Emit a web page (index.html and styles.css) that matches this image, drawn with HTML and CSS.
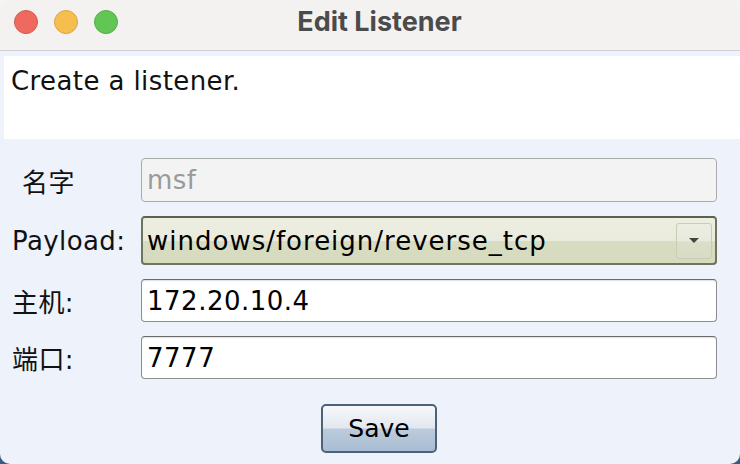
FILE: index.html
```html
<!DOCTYPE html>
<html>
<head>
<meta charset="utf-8">
<link rel="stylesheet" href="styles.css">
</head>
<body>
<div class="window">
  <div class="titlebar">
    <div class="lights">
      <span class="light red"></span>
      <span class="light yellow"></span>
      <span class="light green"></span>
    </div>
    <div class="title">Edit Listener</div>
  </div>
  <div class="content">
    <div class="desc">Create a listener.</div>
    <div class="form">
      <div class="label indent">名字</div>
      <div class="field disabled">msf</div>
      <div class="label">Payload:</div>
      <div class="combo">
        <span class="combo-text">windows/foreign/reverse_tcp</span>
        <span class="combo-btn"><span class="arrow"></span></span>
      </div>
      <div class="label">主机:</div>
      <div class="field">172.20.10.4</div>
      <div class="label">端口:</div>
      <div class="field">7777</div>
    </div>
    <div class="actions">
      <button class="save">Save</button>
    </div>
  </div>
</div>
</body>
</html>
```
FILE: styles.css
```css
html, body {
  margin: 0;
  padding: 0;
  width: 740px;
  height: 464px;
  overflow: hidden;
  background: linear-gradient(#f4f4f4 50%, #3c5a7c 50%);
}
.window {
  width: 740px;
  height: 464px;
  border-radius: 10px;
  overflow: hidden;
  background: #eef2fa;
  display: flex;
  flex-direction: column;
  font-family: "DejaVu Sans", "Noto Sans CJK SC", sans-serif;
}
.titlebar {
  height: 50px;
  background: #f3f2f1;
  border-bottom: 1px solid #cfd0d6;
  position: relative;
  display: flex;
  align-items: center;
  justify-content: center;
  flex-shrink: 0;
}
.lights {
  position: absolute;
  left: 14px;
  top: 10px;
  display: flex;
  gap: 16px;
}
.light {
  width: 24px;
  height: 24px;
  border-radius: 50%;
  box-sizing: border-box;
}
.red { background: #ee6a5f; border: 1px solid #d65a50; }
.yellow { background: #f5be4f; border: 1px solid #dca541; }
.green { background: #62c655; border: 1px solid #53ad47; }
.title {
  font-family: Inter, "Liberation Sans", sans-serif;
  font-weight: 700;
  font-size: 27px;
  color: #4b4b4b;
  margin-top: -8px;
  margin-left: 19px;
}
.content {
  flex: 1;
  display: flex;
  flex-direction: column;
}
.desc {
  margin: 5px 0 0 4px;
  height: 83px;
  background: #ffffff;
  font-size: 26px;
  letter-spacing: 0.4px;
  color: #111;
  padding: 10px 0 0 7px;
  box-sizing: border-box;
  line-height: 30px;
}
.form {
  margin-top: 19px;
  padding: 0 23px 0 12px;
  display: grid;
  grid-template-columns: 129px 1fr;
  row-gap: 14px;
  align-items: center;
}
.label {
  font-size: 26px;
  letter-spacing: 0.4px;
  color: #111;
}
.label.indent { padding-left: 10px; }
.field {
  height: 43px;
  box-sizing: border-box;
  background: #fff;
  border: 1px solid #8e8e8e;
  border-top-color: #6a6a6a;
  border-radius: 4px;
  box-shadow: inset 0 1px 1px rgba(0,0,0,0.12);
  font-size: 26px;
  letter-spacing: 0.5px;
  color: #000;
  padding: 0 5px;
  display: flex;
  align-items: center;
}
.field.disabled {
  height: 44px;
  background: #f3f3f3;
  border-color: #ababab;
  box-shadow: none;
  color: #9a9a9a;
}
.combo {
  height: 49px;
  box-sizing: border-box;
  border: 2px solid #6f735f;
  border-top-color: #5c604c;
  border-radius: 4px;
  background: linear-gradient(#eceee1 0%, #eaebdd 50%, #d8dcc1 52%, #d6dabe 100%);
  display: flex;
  align-items: center;
  padding: 0 3px 0 4px;
  font-size: 26px;
  letter-spacing: 1px;
  color: #000;
}
.combo-text { flex: 1; }
.combo-btn {
  width: 36px;
  height: 36px;
  box-sizing: border-box;
  border: 1px solid #c9ccb5;
  border-radius: 3px;
  background: linear-gradient(#eceee2 0%, #e8eadc 50%, #dcdfc8 52%, #d9dcc4 100%);
  display: flex;
  align-items: center;
  justify-content: center;
}
.arrow {
  width: 0;
  height: 0;
  border-left: 5px solid transparent;
  border-right: 5px solid transparent;
  border-top: 5px solid #444;
}
.actions {
  display: flex;
  justify-content: center;
  margin-top: 25px;
}
.save {
  width: 116px;
  height: 49px;
  box-sizing: border-box;
  border: 2px solid #4d6178;
  border-radius: 5px;
  background: linear-gradient(#f6f8fb 0%, #e3e8f0 48%, #bccbdc 52%, #a9bdd4 100%);
  font-family: "DejaVu Sans", sans-serif;
  font-size: 25px;
  color: #000;
  padding: 0;
  margin-left: 18px;
}
```
